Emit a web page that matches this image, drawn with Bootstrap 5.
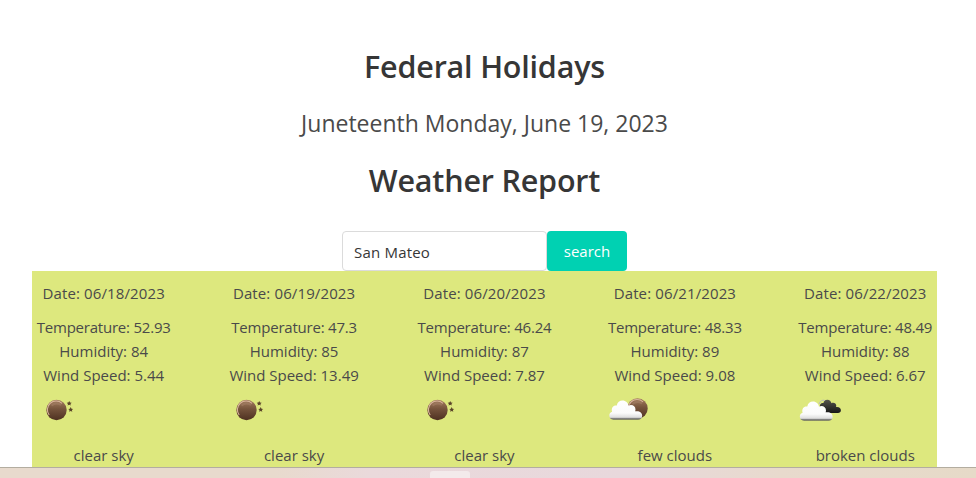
<!DOCTYPE html>
<html lang="en">
<head>
<meta charset="utf-8">
<title>Federal Holidays</title>
<link rel="stylesheet" href="https://cdn.jsdelivr.net/npm/bootstrap@5.3.0/dist/css/bootstrap.min.css">
<style>
body{font-family:"Open Sans","Noto Sans",sans-serif;color:#4a4a4a;font-size:15px;line-height:24px;height:478px}
.page{width:905px;margin-left:32px;padding-top:48px;height:467px}
.headline{font-size:30.5px;line-height:36px;font-weight:600;color:#363636;margin:0;letter-spacing:-.2px}
.holiday{font-size:23px;line-height:36px;margin:21px 0 21px;letter-spacing:0}
.search-row{margin-top:33px;height:40px}
.city{width:205px;height:40px;border-color:#dbdbdb;border-radius:4px;padding:1px 11px 0;font-size:15px;color:#363636;letter-spacing:.2px}
.go{width:80px;height:40px;background:#00d1b2;color:#fff;border-radius:4px;font-size:15px;padding:0}
.forecast{background:#dde87e;height:196px}
.day{width:143.4px;padding-top:10px}
.date{letter-spacing:.12px}
.details{margin-top:10px}
.temp{letter-spacing:-.22px}
.sky{width:60px;height:56px}
.taskbar{height:11px;border-top:1px solid #b3ada0;background:linear-gradient(90deg,#e8dacd 0,#e8dacd 28%,#ead9db 38%,#e8d8dc 64%,#e8dacd 80%,#e6dac8 100%)}
.task{width:40px;height:7px;margin:3px 0 0 430px;background:#f3eaeb;border-radius:3px 3px 0 0}
</style>
</head>
<body class="bg-white overflow-hidden">
<svg width="0" height="0" class="position-absolute" aria-hidden="true">
<defs>
<linearGradient id="brown" x1="0" y1="0" x2="0" y2="1"><stop offset="0" stop-color="#a57d5f"/><stop offset=".45" stop-color="#75533c"/><stop offset="1" stop-color="#4e3121"/></linearGradient>
<linearGradient id="white" x1="0" y1="0" x2="0" y2="1"><stop offset="0" stop-color="#fff"/><stop offset=".65" stop-color="#fbfbfb"/><stop offset=".87" stop-color="#dedede"/><stop offset=".94" stop-color="#777"/><stop offset="1" stop-color="#66665a"/></linearGradient>
<linearGradient id="dark" x1="0" y1="0" x2="0" y2="1"><stop offset="0" stop-color="#55544d"/><stop offset="1" stop-color="#171717"/></linearGradient>
<path id="cloud" d="M10 33.5C7.200 33.500 5.800 31.500 5.800 29.300C5.800 27 7.200 25.800 8.600 25.500C7.400 21.500 10 18.700 13.300 19.300C13.800 16 16.200 14.300 19 14.300C22.300 14.300 24.500 16.600 25 19.400C28.200 17.700 32 19.600 32 23.200C32 24 31.800 24.500 31.600 25C36 24.200 38.700 26.500 38.700 29.500C38.700 32 36.800 33.500 34.500 33.500Z"/>
<g id="moon"><circle cx="24.500" cy="23" r="10.200" fill="url(#brown)"/><path d="M17.200 28A8.700 8.700 0 0 1 30 16.300" fill="none" stroke="#d9b69d" stroke-width="1.100"/><path d="M19.500 18.500Q24 14.500 29 18" fill="none" stroke="#a27e65" stroke-width="2" opacity=".6"/></g>
<path id="star" d="M0-2.600L.8-.9L2.500-.7L1.200 .4L1.600 2.100L0 1.200L-1.600 2.100L-1.200 .4L-2.500-.7L-.8-.9Z" fill="#5a4529"/>
</defs>
</svg>
<main class="page text-center">
<h2 class="headline">Federal Holidays</h2>
<p class="holiday">Juneteenth Monday, June 19, 2023</p>
<h2 class="headline">Weather Report</h2>
<form class="search-row d-flex justify-content-center">
<input class="city form-control" type="text" value="San Mateo" aria-label="City">
<button class="go btn border-0" type="button">search</button>
</form>
<section class="forecast d-flex justify-content-between">
<div class="day"><div class="date">Date: 06/18/2023</div><div class="details"><div class="temp">Temperature: 52.93</div>Humidity: 84<br>Wind Speed: 5.44</div><svg class="sky d-block" viewBox="0 0 60 56"><use href="#moon"/><use href="#star" x="37.200" y="16.500"/><use href="#star" x="38.700" y="22.700"/></svg><div>clear sky</div></div>
<div class="day"><div class="date">Date: 06/19/2023</div><div class="details"><div class="temp">Temperature: 47.3</div>Humidity: 85<br>Wind Speed: 13.49</div><svg class="sky d-block" viewBox="0 0 60 56"><use href="#moon"/><use href="#star" x="37.200" y="16.500"/><use href="#star" x="38.700" y="22.700"/></svg><div>clear sky</div></div>
<div class="day"><div class="date">Date: 06/20/2023</div><div class="details"><div class="temp">Temperature: 46.24</div>Humidity: 87<br>Wind Speed: 7.87</div><svg class="sky d-block" viewBox="0 0 60 56"><use href="#moon"/><use href="#star" x="37.200" y="16.500"/><use href="#star" x="38.700" y="22.700"/></svg><div>clear sky</div></div>
<div class="day"><div class="date">Date: 06/21/2023</div><div class="details"><div class="temp">Temperature: 48.33</div>Humidity: 89<br>Wind Speed: 9.08</div><svg class="sky d-block" viewBox="0 0 60 56"><use href="#moon" x="10" y="-1.500"/><use href="#cloud" x=".5" y="-.7" fill="url(#white)"/></svg><div>few clouds</div></div>
<div class="day"><div class="date">Date: 06/22/2023</div><div class="details"><div class="temp">Temperature: 48.49</div>Humidity: 88<br>Wind Speed: 6.67</div><svg class="sky d-block" viewBox="0 0 60 56"><use href="#cloud" transform="translate(20.200 2.800) scale(.69)" fill="url(#dark)"/><path d="M25 17Q27 12 31 13.500" fill="none" stroke="#bbb" stroke-width="1"/><use href="#cloud" y=".3" fill="url(#white)"/></svg><div>broken clouds</div></div>
</section>
</main>
<footer class="taskbar overflow-hidden"><div class="task"></div></footer>
<script src="https://cdn.jsdelivr.net/npm/bootstrap@5.3.0/dist/js/bootstrap.bundle.min.js"></script>
</body>
</html>
